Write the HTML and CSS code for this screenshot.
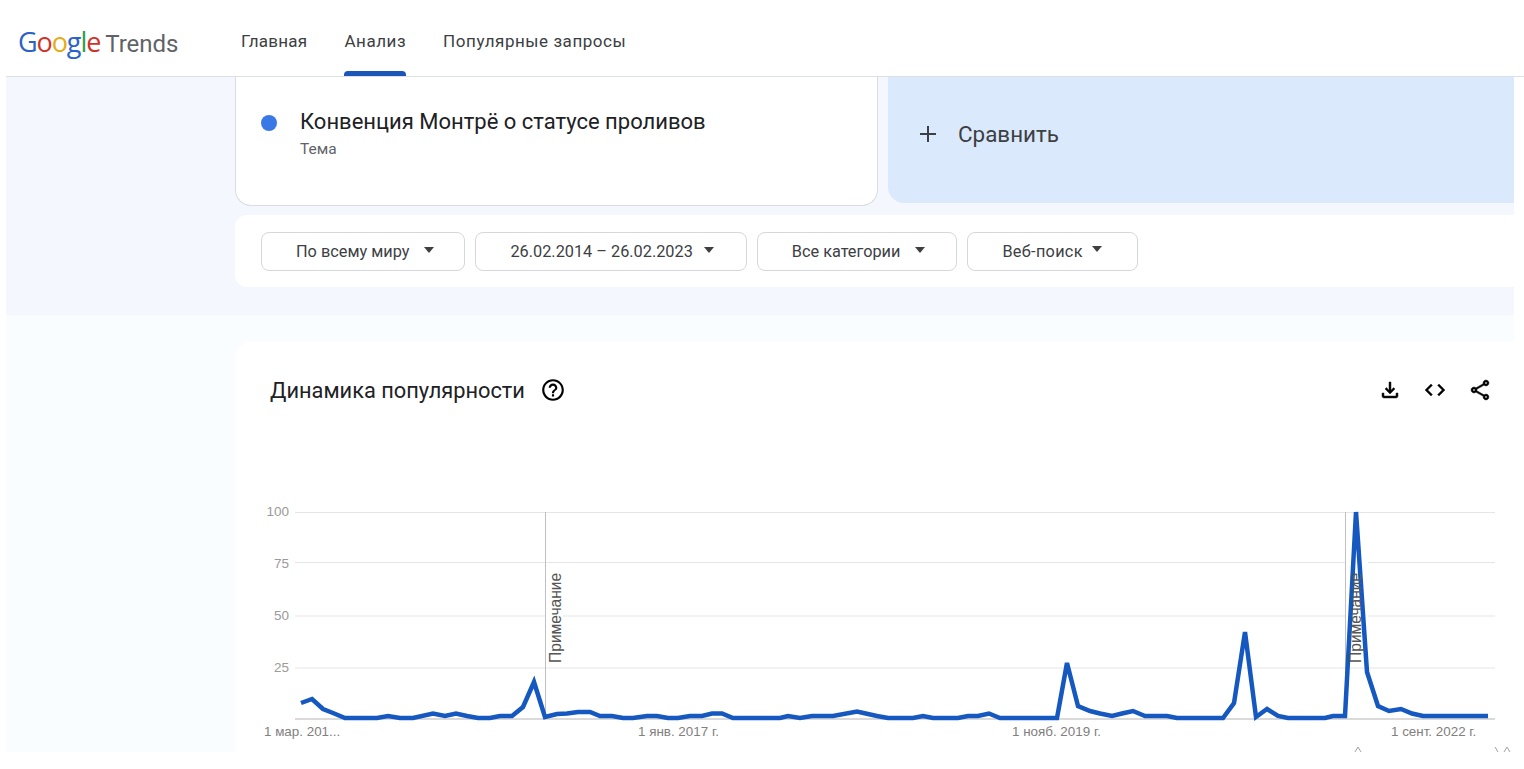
FILE: index.html
```html
<!DOCTYPE html>
<html lang="ru">
<head>
    <meta charset="UTF-8">
    <meta name="viewport" content="width=device-width, initial-scale=1.0">
    <title>Google Trends</title>
    <link rel="stylesheet" href="styles.css">
</head>
<body>
    <div class="header">
        <div class="logo">
            <span class="logo-google"><span class="c-blue">G</span><span class="c-red">o</span><span class="c-yellow">o</span><span class="c-blue">g</span><span class="c-green">l</span><span class="c-red">e</span></span>
            <span class="logo-trends">Trends</span>
        </div>
        <div class="nav">
            <a class="nav-item nav-home">Главная</a>
            <a class="nav-item active">Анализ</a>
            <a class="nav-item">Популярные запросы</a>
        </div>
    </div>

    <div class="page">
        <div class="hero">
            <div class="terms">
                <div class="term-card">
                    <span class="term-dot"></span>
                    <div>
                        <div class="term-title">Конвенция Монтрё о статусе проливов</div>
                        <div class="term-sub">Тема</div>
                    </div>
                </div>
                <div class="compare">
                    <span class="compare-plus">
                        <svg width="16" height="16" viewBox="0 0 16 16"><path d="M7 0h2v7h7v2H9v7H7V9H0V7h7z"/></svg>
                    </span>
                    <span>Сравнить</span>
                </div>
            </div>
            <div class="filters">
                <div class="filter">По всему миру<span class="caret"></span></div>
                <div class="filter filter-date">26.02.2014 – 26.02.2023<span class="caret"></span></div>
                <div class="filter filter-cat">Все категории<span class="caret"></span></div>
                <div class="filter filter-last">Веб-поиск<span class="caret"></span></div>
            </div>
        </div>

        <div class="lower">
            <div class="trend-card">
                <div class="trend-head">
                    <div class="trend-title">
                        <h2>Динамика популярности</h2>
                        <svg width="26" height="26" viewBox="0 0 24 24"><path d="M11 18h2v-2h-2v2zm1-16C6.48 2 2 6.48 2 12s4.48 10 10 10 10-4.48 10-10S17.52 2 12 2zm0 18c-4.41 0-8-3.59-8-8s3.59-8 8-8 8 3.59 8 8-3.59 8-8 8zm0-14c-2.21 0-4 1.79-4 4h2c0-1.1.9-2 2-2s2 .9 2 2c0 2-3 1.75-3 5h2c0-2.25 3-2.5 3-5 0-2.21-1.79-4-4-4z"/></svg>
                    </div>
                    <div class="trend-actions">
                        <svg width="24" height="24" viewBox="0 0 24 24"><path d="M18 15v3H6v-3H4v3c0 1.1.9 2 2 2h12c1.1 0 2-.9 2-2v-3h-2zm-1-4l-1.41-1.41L13 12.17V4h-2v8.17L8.41 9.59 7 11l5 5 5-5z"/></svg>
                        <svg width="24" height="24" viewBox="0 0 24 24"><path d="M9.4 16.6L4.8 12l4.6-4.6L8 6l-6 6 6 6 1.4-1.4zm5.2 0l4.6-4.6-4.6-4.6L16 6l6 6-6 6-1.4-1.4z"/></svg>
                        <svg width="24" height="24" viewBox="0 0 24 24"><path d="M18 16.08c-.76 0-1.44.3-1.96.77L8.91 12.7c.05-.23.09-.46.09-.7s-.04-.47-.09-.7l7.05-4.11c.54.5 1.25.81 2.04.81 1.66 0 3-1.34 3-3s-1.34-3-3-3-3 1.34-3 3c0 .24.04.47.09.7L8.04 9.81C7.5 9.31 6.79 9 6 9c-1.66 0-3 1.34-3 3s1.34 3 3 3c.79 0 1.5-.31 2.04-.81l7.12 4.16c-.05.21-.08.43-.08.65 0 1.61 1.31 2.92 2.92 2.92s2.92-1.31 2.92-2.92-1.31-2.92-2.92-2.92zM18 4c.55 0 1 .45 1 1s-.45 1-1 1-1-.45-1-1 .45-1 1-1zM6 13c-.55 0-1-.45-1-1s.45-1 1-1 1 .45 1 1-.45 1-1 1zm12 7.02c-.55 0-1-.45-1-1s.45-1 1-1 1 .45 1 1-.45 1-1 1z"/></svg>
                    </div>
                </div>
                <!-- viewBox uses page coordinates so points are easy to read off -->
                <svg class="chart" width="1279" height="252" viewBox="235 500 1279 252">
                    <path class="grid" d="M295 512.5H1495"/>
                    <path class="grid" d="M295 562.5H1345M1368 562.5H1495"/>
                    <path class="grid" d="M295 616H545M563 616H1345M1368 616H1495"/>
                    <path class="grid" d="M295 668H1495"/>
                    <path class="axis" d="M295 719H1495"/>
                    <path class="note-line" d="M545.5 512V718M1345.5 512V718"/>
                    <text class="y-label" x="289" y="516">100</text>
                    <text class="y-label" x="289" y="568">75</text>
                    <text class="y-label" x="289" y="620">50</text>
                    <text class="y-label" x="289" y="672">25</text>
                    <text class="x-label" x="264" y="736">1 мар. 201...</text>
                    <text class="x-label" x="638" y="736">1 янв. 2017 г.</text>
                    <text class="x-label" x="1012" y="736">1 нояб. 2019 г.</text>
                    <text class="x-label" x="1391" y="736">1 сент. 2022 г.</text>
                    <polyline class="trend-line" points="301,703 312,699 323,709 333,713 345,718 377,718 388,716 400,718 413,718 433,713.5 445,716 456,713.5 467,716 478,718 490,718 500,716 512,716 523,707 534,682 545,717 557,714 567,713.5 578,712 590,712 600,716 612,716 623,718 633,718 647,716 657,716 668,718 678,718 690,716 702,716 712,713.5 722,713.5 733,718 780,718 788,716 800,718 812,716 833,716 857,711.5 877,716 888,718 913,718 923,716 933,718 958,718 968,716 978,716 989,713.5 1000,718 1057,718 1067,663 1078,706 1090,711 1100,713.5 1112,716 1122,713.5 1133,711 1145,716 1167,716 1177,718 1223,718 1234,703 1245,632 1256,717 1267,709 1278,716 1288,718 1325,718 1333,716 1345,716 1356,512 1367,672 1378,706 1389,711 1401,709 1412,713.5 1423,716 1488,716"/>
                    <text class="note-label" transform="translate(561 663) rotate(-90)">Примечание</text>
                    <text class="note-label" transform="translate(1361 663) rotate(-90)">Примечание</text>
                    <path class="note-mark" d="M1355 752l3-5 3 5M1495 747l3 5M1504 752l3-5 3 5"/>
                </svg>
            </div>
        </div>
    </div>
</body>
</html>
```

FILE: styles.css
```css
body {
    margin: 0;
    background: white;
    font-family: Roboto, 'Liberation Sans', sans-serif;
    color: #202124;
    overflow: hidden;
}

.header {
    display: flex;
    align-items: center;
    height: 76px;
    border-bottom: 1px solid #dcdfe3;
    margin-left: 6px;
    padding-left: 12px;
}

.logo {
    display: flex;
    align-items: baseline;
    gap: 5px;
    width: 223px;
    margin-top: 6px;
}

.logo-google {
    font-family: 'Open Sans', sans-serif;
    font-size: 27px;
    letter-spacing: -1.1px;
    font-weight: 500;
}

.logo-trends {
    font-size: 24px;
    color: #5f6368;
}

.c-blue { color: #2a62c9; }
.c-red { color: #d0322a; }
.c-yellow { color: #e5ac14; }
.c-green { color: #2f9c4a; }

.nav {
    display: flex;
    gap: 37px;
    align-self: stretch;
}

.nav-item {
    display: flex;
    align-items: center;
    position: relative;
    font-size: 17px;
    letter-spacing: 0.55px;
    color: #3c4043;
    padding-top: 6px;
}

.nav-home {
    letter-spacing: 0.25px;
}

.nav-item.active::after {
    content: "";
    position: absolute;
    left: 0;
    right: 0;
    bottom: 0;
    height: 5px;
    background: #1a56b8;
    border-radius: 4px 4px 0 0;
}

.page {
    margin-left: 6px;
    width: 1508px;
}

.hero {
    height: 238px;
    background: #f4f8fe;
    padding-left: 229px;
    box-sizing: border-box;
}

.terms {
    display: flex;
    gap: 10px;
    align-items: flex-start;
}

.term-card {
    display: flex;
    gap: 23px;
    width: 643px;
    height: 129px;
    box-sizing: border-box;
    padding: 31px 0 0 25px;
    background: white;
    border: 1px solid #dadce0;
    border-top: none;
    border-radius: 0 0 16px 16px;
}

.term-dot {
    width: 16px;
    height: 16px;
    margin-top: 7px;
    border-radius: 50%;
    background: #3b78e7;
}

.term-title {
    font-size: 22px;
    line-height: 28px;
    color: #202124;
}

.term-sub {
    font-size: 15.5px;
    margin-top: 4px;
    color: #5f6368;
}

.compare {
    display: flex;
    align-items: center;
    gap: 22px;
    flex: 1;
    height: 126px;
    box-sizing: border-box;
    padding: 0 0 12px 32px;
    background: #dbe9fd;
    border-radius: 0 0 0 16px;
    font-size: 22.4px;
    color: #3c4043;
}

.compare-plus {
    display: flex;
}

.compare-plus svg {
    fill: #3c4043;
}

.filters {
    display: flex;
    gap: 10px;
    height: 72px;
    box-sizing: border-box;
    margin-top: 9px;
    padding: 17px 0 0 26px;
    background: white;
    border-radius: 12px 0 0 12px;
}

.filter {
    display: flex;
    align-items: center;
    gap: 15px;
    height: 39px;
    box-sizing: border-box;
    padding: 0 30px 0 34px;
    border: 1px solid #d5d7db;
    border-radius: 8px;
    font-size: 16.3px;
    color: #3c4043;
}

.caret {
    width: 0;
    height: 0;
    margin-top: -3px;
    border-left: 5.5px solid transparent;
    border-right: 5.5px solid transparent;
    border-top: 6px solid #3c4043;
}

.filter-date {
    gap: 11px;
    padding-right: 32px;
}

.filter-cat {
    padding-right: 31px;
}

.filter-last {
    gap: 9px;
    padding-right: 35px;
    letter-spacing: 0.3px;
}

.filter-last .caret {
    margin-top: -6px;
}

.lower {
    height: 437px;
    background: #fafdff;
    padding: 27px 0 0 229px;
    box-sizing: border-box;
}

.trend-card {
    height: 410px;
    background: white;
    border-radius: 16px 0 0 0;
}

.trend-head {
    display: flex;
    align-items: center;
    justify-content: space-between;
    height: 96px;
    margin-bottom: 62px;
    padding: 0 22px 0 35px;
}

.trend-title {
    display: flex;
    align-items: center;
    gap: 15px;
}

.trend-title h2 {
    margin: 0;
    font-size: 21.8px;
    font-weight: 400;
}

.trend-actions {
    display: flex;
    gap: 21px;
}

.trend-actions svg {
    stroke: #202124;
    stroke-width: 0.5;
}

.chart {
    display: block;
}

.grid {
    stroke: #e4e5e7;
    stroke-width: 1;
    fill: none;
}

.axis {
    stroke: #b5b5b5;
    stroke-width: 1;
    fill: none;
}

.note-line {
    stroke: #c0c0c0;
    stroke-width: 1;
    fill: none;
}

.trend-line {
    fill: none;
    stroke: #1558c0;
    stroke-width: 4.5;
    stroke-linejoin: miter;
}

.y-label {
    font-family: 'Liberation Sans', sans-serif;
    font-size: 13.5px;
    fill: #9a9a9a;
    text-anchor: end;
}

.x-label {
    font-family: 'Liberation Sans', sans-serif;
    font-size: 13.4px;
    fill: #808080;
}

.note-label {
    font-family: 'Liberation Sans', sans-serif;
    font-size: 15.6px;
    fill: #555;
}

.note-mark {
    fill: none;
    stroke: #a0a0a0;
    stroke-width: 1;
}
```
